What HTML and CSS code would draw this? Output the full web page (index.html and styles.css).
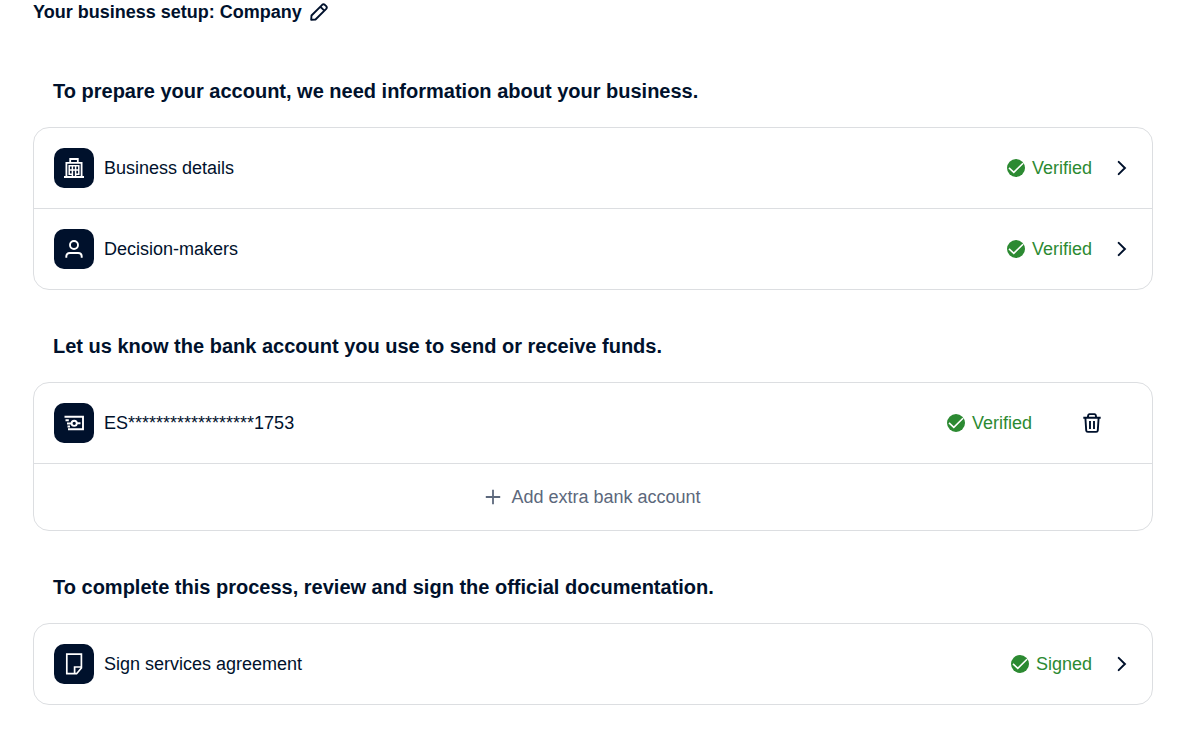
FILE: index.html
```html
<!DOCTYPE html>
<html lang="en">
<head>
<meta charset="utf-8">
<title>Business setup</title>
<link rel="stylesheet" href="styles.css">
</head>
<body>
<svg class="defs" aria-hidden="true">
  <symbol id="check" viewBox="0 0 18 18"><circle cx="9" cy="9" r="9" fill="currentColor"/><path d="M2 8.8 6.8 13.3 16 4.3" fill="none" stroke="#fff" stroke-width="1.6"/></symbol>
  <symbol id="chevron" viewBox="0 0 10 16"><path d="M1.7 1.9 7.9 8 1.7 14.1" fill="none" stroke="currentColor" stroke-width="2" stroke-linecap="round"/></symbol>
</svg>
<main class="page">
  <header class="setup">
    <h1 class="setup-title">Your business setup: Company</h1>
    <button class="icon-button" type="button" aria-label="Edit business setup">
      <svg width="18" height="18" viewBox="0 0 18 18" fill="none" stroke="currentColor" stroke-width="1.9" stroke-linejoin="round"><path d="M1.2 16.8 1.5 12.5 12.2 1.8Q13.5.6 14.8 1.8L16.2 3.2Q17.4 4.5 16.2 5.8L5.5 16.5ZM10.3 3.7 14.3 7.7"/></svg>
    </button>
  </header>

  <section class="section">
    <h2 class="section-title">To prepare your account, we need information about your business.</h2>
    <div class="card">
      <a class="row" href="#business">
        <span class="tile"><svg width="20" height="20" viewBox="0 0 20 20" fill="none" stroke="currentColor" stroke-width="1.8"><path d="M0 19H20M2.4 19V4.9H17.6V19M6.2 4.5V1H13.8V4.5"/><path d="M4.5 7.8H15.5M4.5 12H15.5M4.5 16.2H8.4M11.6 16.2H15.5M5.2 7.5V16.5M8.4 7.5V19M11.6 7.5V19M14.8 7.5V16.5" stroke-width="1.5"/></svg></span>
        <span class="label">Business details</span>
        <span class="status"><svg class="check"><use href="#check"/></svg>Verified</span>
        <svg class="chevron"><use href="#chevron"/></svg>
      </a>
      <a class="row" href="#people">
        <span class="tile"><svg width="20" height="20" viewBox="0 0 20 20" fill="none" stroke="currentColor" stroke-width="1.9"><circle cx="10" cy="6" r="4"/><path d="M2.3 18.8V17.5Q2.3 14 5.8 14H14.2Q17.7 14 17.7 17.5V18.8"/></svg></span>
        <span class="label">Decision-makers</span>
        <span class="status"><svg class="check"><use href="#check"/></svg>Verified</span>
        <svg class="chevron"><use href="#chevron"/></svg>
      </a>
    </div>
  </section>

  <section class="section">
    <h2 class="section-title">Let us know the bank account you use to send or receive funds.</h2>
    <div class="card">
      <div class="row row-account">
        <span class="tile"><svg width="20" height="20" viewBox="0 0 20 20" fill="none" stroke="currentColor" stroke-width="1.9"><path d="M.5 3.8H19V16.2H4M1.5 7.3H4.8M3 10.5H7M3.5 13.5H6M13 10.3H16.5"/><circle cx="10.2" cy="10.3" r="2.6"/></svg></span>
        <span class="label">ES******************1753</span>
        <span class="status"><svg class="check"><use href="#check"/></svg>Verified</span>
        <button class="icon-button" type="button" aria-label="Delete bank account">
          <svg width="18" height="20" viewBox="0 0 18 20" fill="none" stroke="currentColor" stroke-width="1.9"><path d="M.3 4.7H17.7M4.8 4.5 5.3 2Q5.5 1.1 6.4 1.1H11.6Q12.5 1.1 12.7 2L13.2 4.5M2.4 5 3.2 17.4Q3.3 18.9 4.8 18.9H13.2Q14.7 18.9 14.8 17.4L15.6 5M7 8V16M11 8V16"/></svg>
        </button>
      </div>
      <button class="add" type="button">
        <svg class="plus" width="16" height="16" viewBox="0 0 16 16" fill="none" stroke="currentColor" stroke-width="1.8"><path d="M.8 8H15.2M8 .8V15.2"/></svg>
        Add extra bank account
      </button>
    </div>
  </section>

  <section class="section">
    <h2 class="section-title">To complete this process, review and sign the official documentation.</h2>
    <div class="card">
      <a class="row" href="#agreement">
        <span class="tile"><svg width="20" height="22" viewBox="0 0 20 22" fill="none" stroke="currentColor" stroke-width="1.7"><path d="M2.8 1.2H17.4V15L12.6 20.7H2.8ZM10.6 20.7V14H17.4"/></svg></span>
        <span class="label">Sign services agreement</span>
        <span class="status"><svg class="check"><use href="#check"/></svg>Signed</span>
        <svg class="chevron"><use href="#chevron"/></svg>
      </a>
    </div>
  </section>
</main>
</body>
</html>
```
FILE: styles.css
```css
* { box-sizing: border-box; }

body {
  margin: 0;
  background: #fff;
  color: #00112c;
  font: 18px/24px "Liberation Sans", Arial, sans-serif;
}

svg { display: block; flex: none; }
.defs { position: absolute; width: 0; height: 0; }

.page {
  display: flex;
  flex-direction: column;
  gap: 44px;
  padding: 0 25px 48px 33px;
}

.setup {
  display: flex;
  align-items: center;
  gap: 8px;
  margin-bottom: 11px;
}
.setup-title { margin: 0; font-size: 18px; line-height: 24px; }

.section-title {
  margin: 0 0 24px;
  padding: 0 20px;
  font-size: 20px;
  line-height: 24px;
}

.icon-button, .add {
  padding: 0;
  border: 0;
  background: none;
  color: inherit;
  font: inherit;
  cursor: pointer;
}

.card {
  border: 1px solid #dcdee1;
  border-radius: 16px;
  overflow: hidden;
}
.card > * + * { border-top: 1px solid #dcdee1; }

.row {
  display: flex;
  align-items: center;
  box-sizing: content-box;
  height: 80px;
  padding: 0 25px 0 20px;
  color: inherit;
  text-decoration: none;
}

.tile {
  display: flex;
  align-items: center;
  justify-content: center;
  width: 40px;
  height: 40px;
  margin-right: 10px;
  border-radius: 10px;
  background: #00112c;
  color: #fff;
}

.label { flex: 1; }

.status {
  display: flex;
  align-items: center;
  gap: 7px;
  color: #2c8a32;
}
.check { width: 18px; height: 18px; }

.chevron { width: 10px; height: 16px; margin-left: 25px; }

.row-account { padding-right: 51px; }
.row-account .icon-button { margin-left: 51px; }

.add {
  display: flex;
  align-items: center;
  justify-content: center;
  gap: 10px;
  width: 100%;
  height: 67px;
  color: #5c687c;
}
```
